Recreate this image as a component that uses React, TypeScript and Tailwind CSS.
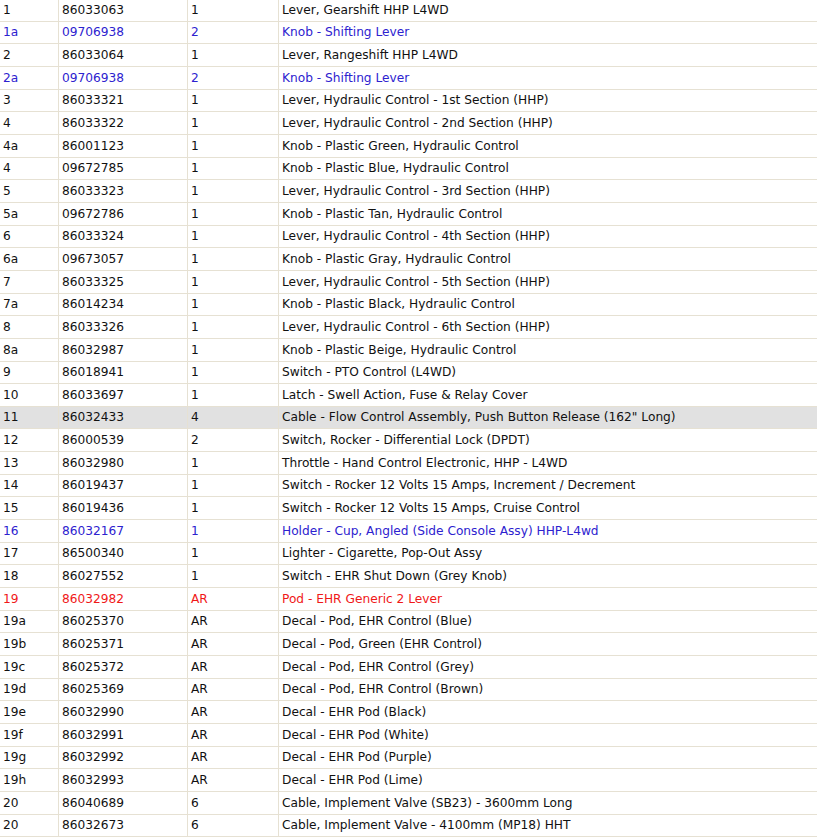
import React from "react";

type Row = { no: string; part: string; qty: string; desc: string; tone?: "blue" | "red" | "hl" };

const rows: Row[] = [
  { no: "1", part: "86033063", qty: "1", desc: "Lever, Gearshift HHP L4WD" },
  { no: "1a", part: "09706938", qty: "2", desc: "Knob - Shifting Lever", tone: "blue" },
  { no: "2", part: "86033064", qty: "1", desc: "Lever, Rangeshift HHP L4WD" },
  { no: "2a", part: "09706938", qty: "2", desc: "Knob - Shifting Lever", tone: "blue" },
  { no: "3", part: "86033321", qty: "1", desc: "Lever, Hydraulic Control - 1st Section (HHP)" },
  { no: "4", part: "86033322", qty: "1", desc: "Lever, Hydraulic Control - 2nd Section (HHP)" },
  { no: "4a", part: "86001123", qty: "1", desc: "Knob - Plastic Green, Hydraulic Control" },
  { no: "4", part: "09672785", qty: "1", desc: "Knob - Plastic Blue, Hydraulic Control" },
  { no: "5", part: "86033323", qty: "1", desc: "Lever, Hydraulic Control - 3rd Section (HHP)" },
  { no: "5a", part: "09672786", qty: "1", desc: "Knob - Plastic Tan, Hydraulic Control" },
  { no: "6", part: "86033324", qty: "1", desc: "Lever, Hydraulic Control - 4th Section (HHP)" },
  { no: "6a", part: "09673057", qty: "1", desc: "Knob - Plastic Gray, Hydraulic Control" },
  { no: "7", part: "86033325", qty: "1", desc: "Lever, Hydraulic Control - 5th Section (HHP)" },
  { no: "7a", part: "86014234", qty: "1", desc: "Knob - Plastic Black, Hydraulic Control" },
  { no: "8", part: "86033326", qty: "1", desc: "Lever, Hydraulic Control - 6th Section (HHP)" },
  { no: "8a", part: "86032987", qty: "1", desc: "Knob - Plastic Beige, Hydraulic Control" },
  { no: "9", part: "86018941", qty: "1", desc: "Switch - PTO Control (L4WD)" },
  { no: "10", part: "86033697", qty: "1", desc: "Latch - Swell Action, Fuse & Relay Cover" },
  { no: "11", part: "86032433", qty: "4", desc: "Cable - Flow Control Assembly, Push Button Release (162\" Long)", tone: "hl" },
  { no: "12", part: "86000539", qty: "2", desc: "Switch, Rocker - Differential Lock (DPDT)" },
  { no: "13", part: "86032980", qty: "1", desc: "Throttle - Hand Control Electronic, HHP - L4WD" },
  { no: "14", part: "86019437", qty: "1", desc: "Switch - Rocker 12 Volts 15 Amps, Increment / Decrement" },
  { no: "15", part: "86019436", qty: "1", desc: "Switch - Rocker 12 Volts 15 Amps, Cruise Control" },
  { no: "16", part: "86032167", qty: "1", desc: "Holder - Cup, Angled (Side Console Assy) HHP-L4wd", tone: "blue" },
  { no: "17", part: "86500340", qty: "1", desc: "Lighter - Cigarette, Pop-Out Assy" },
  { no: "18", part: "86027552", qty: "1", desc: "Switch - EHR Shut Down (Grey Knob)" },
  { no: "19", part: "86032982", qty: "AR", desc: "Pod - EHR Generic 2 Lever", tone: "red" },
  { no: "19a", part: "86025370", qty: "AR", desc: "Decal - Pod, EHR Control (Blue)" },
  { no: "19b", part: "86025371", qty: "AR", desc: "Decal - Pod, Green (EHR Control)" },
  { no: "19c", part: "86025372", qty: "AR", desc: "Decal - Pod, EHR Control (Grey)" },
  { no: "19d", part: "86025369", qty: "AR", desc: "Decal - Pod, EHR Control (Brown)" },
  { no: "19e", part: "86032990", qty: "AR", desc: "Decal - EHR Pod (Black)" },
  { no: "19f", part: "86032991", qty: "AR", desc: "Decal - EHR Pod (White)" },
  { no: "19g", part: "86032992", qty: "AR", desc: "Decal - EHR Pod (Purple)" },
  { no: "19h", part: "86032993", qty: "AR", desc: "Decal - EHR Pod (Lime)" },
  { no: "20", part: "86040689", qty: "6", desc: "Cable, Implement Valve (SB23) - 3600mm Long" },
  { no: "20", part: "86032673", qty: "6", desc: "Cable, Implement Valve - 4100mm (MP18) HHT" },
];

export default function App() {
  return (
    <div className="w-[817px] h-[839px] overflow-hidden bg-white font-['DejaVu_Sans',Verdana,sans-serif] text-[12.2px]">
      {/* parts list, scrolled a little past the top */}
      <div className="-mt-[2px] border-t border-[#e6e1d3]">
        {rows.map((r, i) => {
          const color =
            r.tone === "blue" ? "text-[#2d22cf]" : r.tone === "red" ? "text-[#f01818]" : "text-[#111]";
          return (
            <div
              key={i}
              className={`flex h-[22.67px] border-b border-[#e6e1d3] ${color} ${r.tone === "hl" ? "bg-[#e1e1e1]" : ""}`}
            >
              <div className="w-[59px] shrink-0 flex items-center pl-[3px] border-r border-[#e6e1d3]">{r.no}</div>
              <div className="w-[129px] shrink-0 flex items-center pl-[3px] border-r border-[#e6e1d3]">{r.part}</div>
              <div className="w-[91px] shrink-0 flex items-center pl-[3px] border-r border-[#e6e1d3]">{r.qty}</div>
              <div className="flex-1 flex items-center pl-[3px] whitespace-nowrap">{r.desc}</div>
            </div>
          );
        })}
      </div>
    </div>
  );
}
